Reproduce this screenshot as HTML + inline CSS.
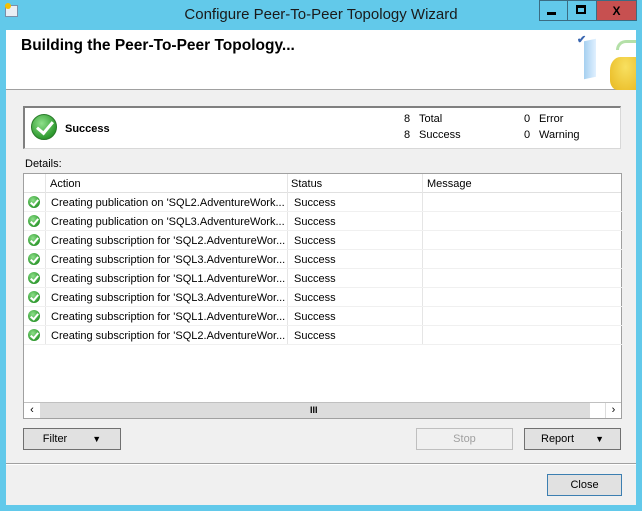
<!DOCTYPE html>
<html><head><style>
*{margin:0;padding:0;box-sizing:border-box}
body{width:642px;height:511px;background:#62c9ea;font-family:"Liberation Sans",sans-serif;font-size:11px;color:#000;position:relative;overflow:hidden}
.a{position:absolute}
.t{white-space:nowrap}
.btn{position:absolute;background:#e1e1e1;border:1px solid #707070;text-align:center;line-height:20px;font-size:11px}
.ck{position:absolute;width:12px;height:12px;border-radius:50%;background:radial-gradient(circle at 40% 35%,#8ee08a,#2f9a2f 70%,#1e7a1e)}
.ck:after{content:"";position:absolute;left:4px;top:2px;width:3px;height:6px;border:solid #fff;border-width:0 2px 2px 0;transform:rotate(40deg)}
.big{position:absolute;width:26px;height:26px;border-radius:50%;background:radial-gradient(circle at 40% 35%,#8ee08a,#2f9a2f 70%,#1e7a1e);border:1px solid #2a7a2a}
.big:after{content:"";position:absolute;left:8px;top:3px;width:7px;height:13px;border:solid #fff;border-width:0 3px 3px 0;transform:rotate(40deg)}
.row{position:absolute;left:0;width:598px;height:19px;border-bottom:1px solid #f0f0f0}
</style></head><body>
<div class="a" style="left:5px;top:5px;width:13px;height:12px;background:#e8eef4;border:1px solid #7a8fa8"></div>
<div class="a" style="left:5px;top:3px;width:6px;height:6px;background:#f5c000;border-radius:50%"></div>
<div class="a t" style="left:0;width:642px;top:6px;text-align:center;font-size:15px;color:#1a1a1a">Configure Peer-To-Peer Topology Wizard</div>
<div class="a" style="left:539px;top:0;width:29px;height:21px;border:1px solid #3b6c82;background:#62c9ea"></div>
<div class="a" style="left:547px;top:12px;width:9px;height:3px;background:#000"></div>
<div class="a" style="left:567px;top:0;width:30px;height:21px;border:1px solid #3b6c82;background:#62c9ea"></div>
<div class="a" style="left:576px;top:5px;width:10px;height:9px;border:2px solid #000;border-top-width:3px"></div>
<div class="a" style="left:596px;top:0;width:41px;height:21px;border:1px solid #3b6c82;background:#c75050;color:#000;font-weight:bold;text-align:center;line-height:20px;font-size:12px">X</div>
<div class="a" style="left:6px;top:30px;width:630px;height:475px;background:#f0f0f0"></div>
<div class="a" style="left:6px;top:30px;width:630px;height:60px;background:#fff;border-bottom:1px solid #a0a0a0"></div>
<div class="a t" style="left:21px;top:37px;font-size:15.5px;font-weight:bold">Building the Peer-To-Peer Topology...</div>
<div class="a" style="left:584px;top:40px;width:12px;height:38px;background:linear-gradient(90deg,#a6d0f0,#e0f0ff);transform:skewY(-12deg)"></div>
<div class="a" style="left:610px;top:57px;width:26px;height:33px;background:radial-gradient(ellipse at 60% 30%,#f8e060,#e8b820);border-radius:40% 0 0 30%"></div>
<div class="a" style="left:616px;top:40px;width:20px;height:10px;border:3px solid #b4e0a8;border-radius:10px 0 0 0;border-right:none;border-bottom:none"></div>
<div class="a" style="left:577px;top:33px;color:#3a66b0;font-size:11px;font-weight:bold">✔</div>
<div class="a" style="left:23px;top:106px;width:598px;height:43px;background:#fff;border:1px solid #d8d8d8;border-top:2px solid #808080;border-left:2px solid #808080"></div>
<div class="big" style="left:31px;top:114px"></div>
<div class="a t" style="left:65px;top:123px;font-weight:bold;font-size:11px">Success</div>
<div class="a t" style="left:404px;top:113px">8</div><div class="a t" style="left:419px;top:113px">Total</div>
<div class="a t" style="left:404px;top:129px">8</div><div class="a t" style="left:419px;top:129px">Success</div>
<div class="a t" style="left:524px;top:113px">0</div><div class="a t" style="left:539px;top:113px">Error</div>
<div class="a t" style="left:524px;top:129px">0</div><div class="a t" style="left:539px;top:129px">Warning</div>
<div class="a t" style="left:25px;top:158px">Details:</div>
<div class="a" style="left:23px;top:173px;width:599px;height:246px;background:#fff;border:1px solid #a0a0a0">
 <div class="a" style="left:0;top:0;width:597px;height:19px;border-bottom:1px solid #e0e0e0"></div>
 <div class="a" style="left:21px;top:0;width:1px;height:170px;background:#e5e5e5"></div>
 <div class="a" style="left:263px;top:0;width:1px;height:170px;background:#e5e5e5"></div>
 <div class="a" style="left:398px;top:0;width:1px;height:170px;background:#e5e5e5"></div>
 <div class="a t" style="left:26px;top:4px">Action</div>
 <div class="a t" style="left:267px;top:4px">Status</div>
 <div class="a t" style="left:403px;top:4px">Message</div>
 <div id="rows"></div>
 <div class="a" style="left:0;top:228px;width:597px;height:16px;background:#dcdcdc;border-top:1px solid #c0c0c0"></div>
 <div class="a" style="left:0;top:229px;width:16px;height:15px;background:#fff;text-align:center;line-height:14px;font-size:11px">&lsaquo;</div>
 <div class="a" style="left:566px;top:229px;width:15px;height:15px;background:#fff"></div>
 <div class="a" style="left:582px;top:229px;width:15px;height:15px;background:#fff;text-align:center;line-height:14px;font-size:11px">&rsaquo;</div>
 <div class="a" style="left:286px;top:231px;font-size:9px;font-weight:bold">III</div>
</div>
<div class="btn" style="left:23px;top:428px;width:98px;height:22px">Filter <span style="font-size:9px;margin-left:22px">▼</span></div>
<div class="btn" style="left:416px;top:428px;width:97px;height:22px;background:#f0f0f0;border-color:#bfbfbf;color:#a0a0a0">Stop</div>
<div class="btn" style="left:524px;top:428px;width:97px;height:22px">Report <span style="font-size:9px;margin-left:18px">▼</span></div>
<div class="a" style="left:6px;top:463px;width:630px;height:1px;background:#a0a0a0"></div>
<div class="a" style="left:6px;top:464px;width:630px;height:1px;background:#fff"></div>
<div class="btn" style="left:547px;top:474px;width:75px;height:22px;border-color:#3c7fb1">Close</div>
<script>
var acts=["Creating publication on 'SQL2.AdventureWork...","Creating publication on 'SQL3.AdventureWork...","Creating subscription for 'SQL2.AdventureWor...","Creating subscription for 'SQL3.AdventureWor...","Creating subscription for 'SQL1.AdventureWor...","Creating subscription for 'SQL3.AdventureWor...","Creating subscription for 'SQL1.AdventureWor...","Creating subscription for 'SQL2.AdventureWor..."];
var h="";acts.forEach(function(a,i){var y=19+i*19;h+='<div class="row" style="top:'+y+'px"></div><div class="ck" style="left:4px;top:'+(y+3)+'px"></div><div class="a t" style="left:27px;top:'+(y+4)+'px;width:234px;overflow:hidden">'+a+'</div><div class="a t" style="left:270px;top:'+(y+4)+'px">Success</div>';});
document.getElementById("rows").innerHTML=h;
</script>
</body></html>
